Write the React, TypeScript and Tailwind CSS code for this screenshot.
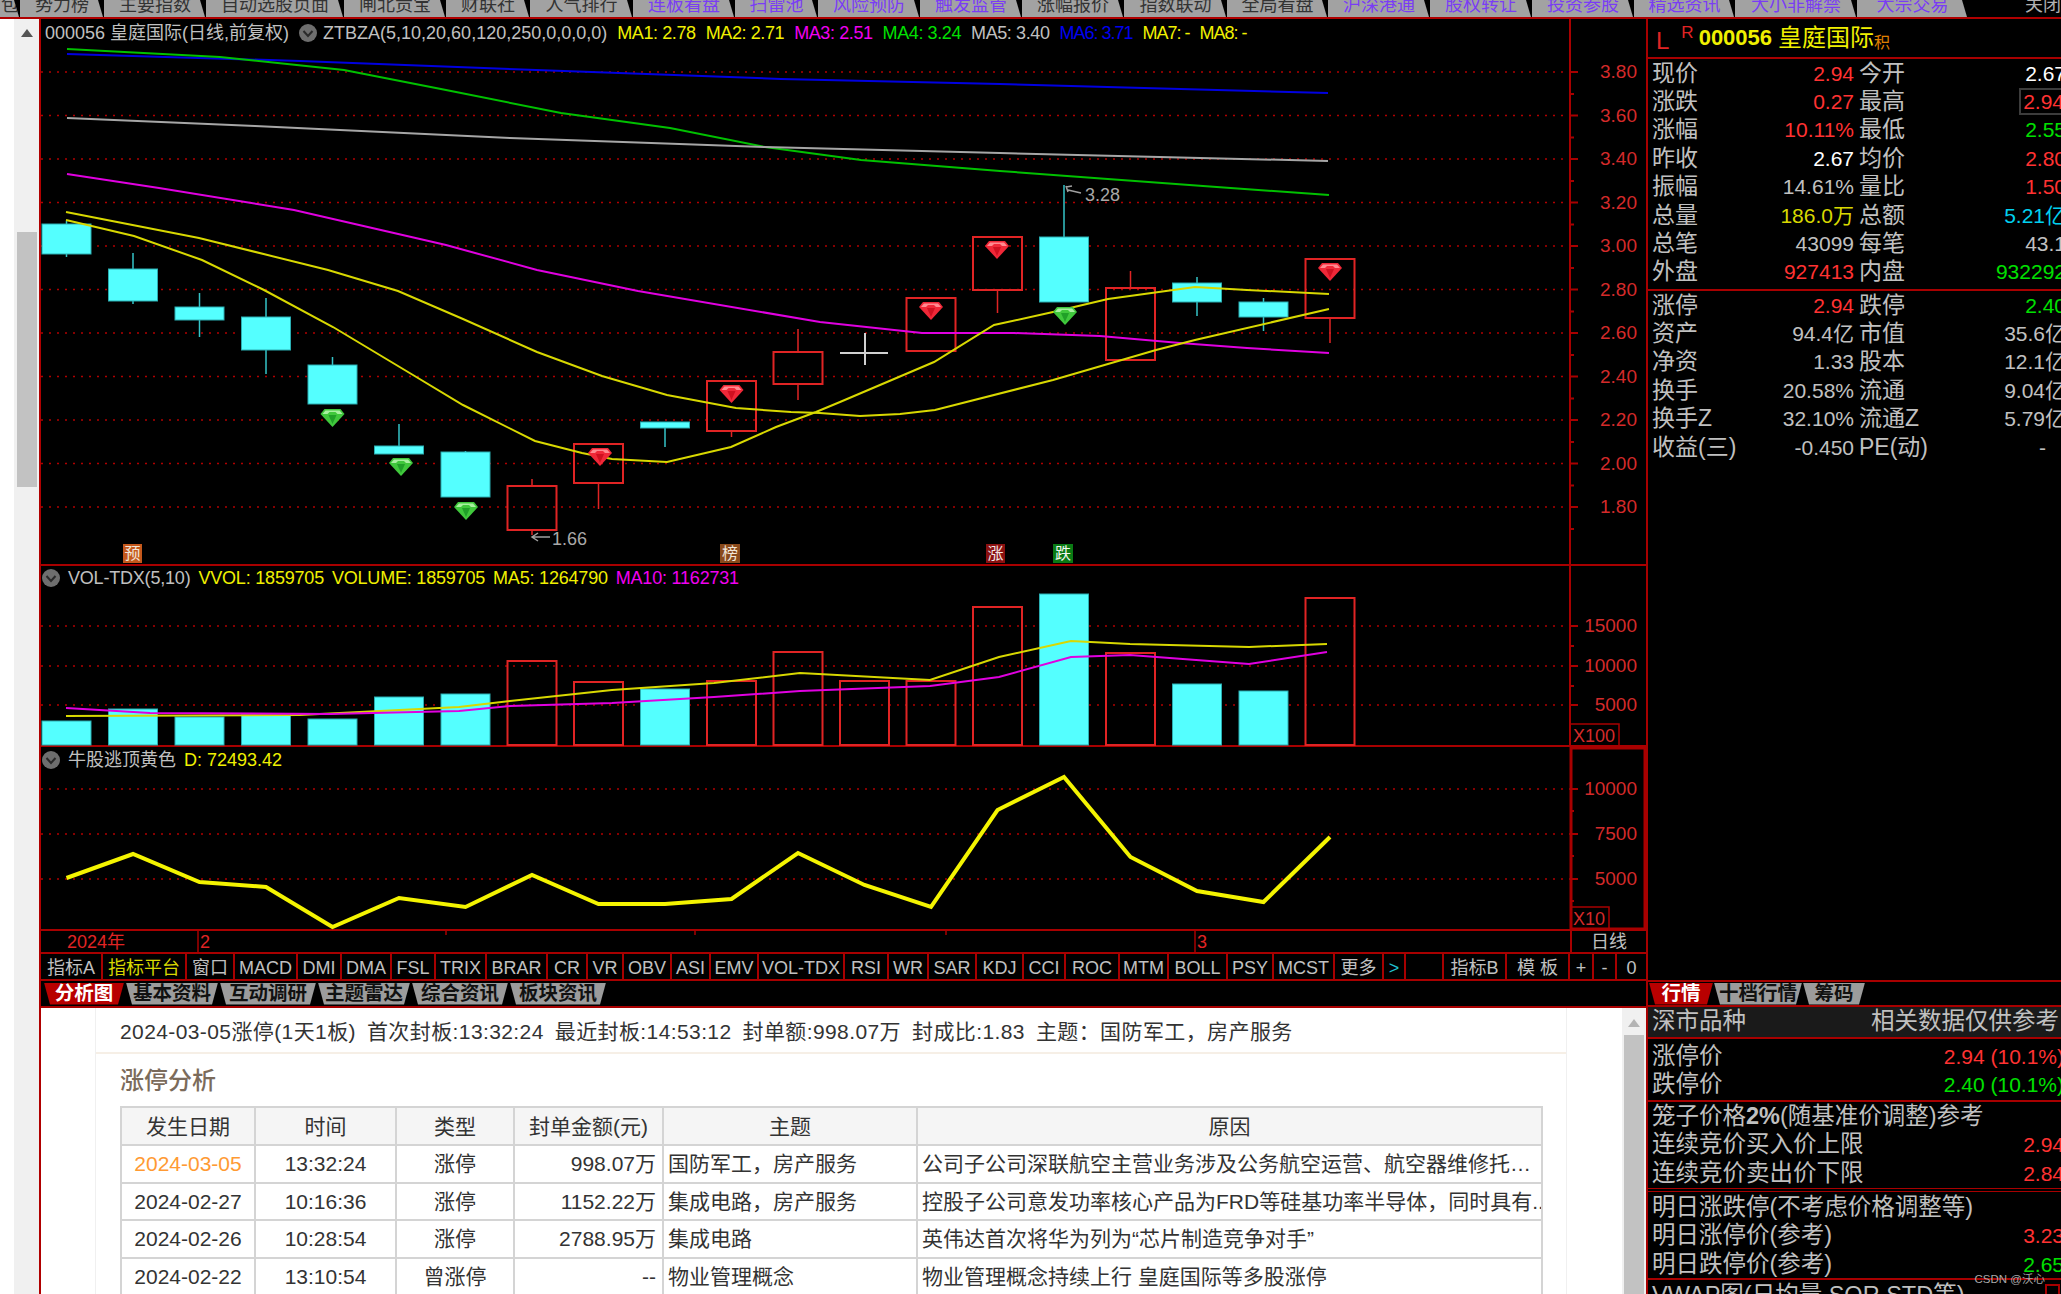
import React from "react";

const RED_LINE = "#a80000";
const CYAN = "#54ffff";

const cx = (i: number) => 66.5 + 66.5 * i;
const pts = (list: number[][]) => list.map((p) => p.join(",")).join(" ");

// 顶部标签，左右被窗口截断
const TOP_TABS = [
  { label: "包", w: "w-[20px]", tone: "text-[#333]" },
  { label: "势力榜", w: "w-[84px]", tone: "text-[#333]" },
  { label: "主要指数", w: "w-[102px]", tone: "text-[#333]" },
  { label: "自动选股页面", w: "w-[138px]", tone: "text-[#333]" },
  { label: "闸北贡宝", w: "w-[102px]", tone: "text-[#333]" },
  { label: "财联社", w: "w-[84px]", tone: "text-[#333]" },
  { label: "人气排行", w: "w-[103px]", tone: "text-[#333]" },
  { label: "连板看盘", w: "w-[102px]", tone: "text-[#7a3cf5]" },
  { label: "扫雷池", w: "w-[83px]", tone: "text-[#7a3cf5]" },
  { label: "风险预防", w: "w-[102px]", tone: "text-[#7a3cf5]" },
  { label: "触发监管", w: "w-[102px]", tone: "text-[#7a3cf5]" },
  { label: "涨幅报价", w: "w-[102px]", tone: "text-[#333]" },
  { label: "指数联动", w: "w-[103px]", tone: "text-[#333]" },
  { label: "全局看盘", w: "w-[101px]", tone: "text-[#333]" },
  { label: "沪深港通", w: "w-[102px]", tone: "text-[#7a3cf5]" },
  { label: "股权转让", w: "w-[102px]", tone: "text-[#7a3cf5]" },
  { label: "投资参股", w: "w-[102px]", tone: "text-[#7a3cf5]" },
  { label: "精选资讯", w: "w-[101px]", tone: "text-[#7a3cf5]" },
  { label: "大小非解禁", w: "w-[122px]", tone: "text-[#7a3cf5]" },
  { label: "大宗交易", w: "w-[111px]", tone: "text-[#7a3cf5]" },
];

const CANDLES = [
  { top: 224, bot: 254, hi: 221, lo: 257 },
  { top: 269, bot: 301, hi: 253, lo: 304 },
  { top: 307, bot: 320, hi: 293, lo: 337 },
  { top: 317, bot: 350, hi: 298, lo: 374 },
  { top: 365, bot: 404, hi: 357, lo: 404 },
  { top: 446, bot: 454, hi: 424, lo: 454 },
  { top: 452, bot: 497, hi: 451, lo: 497 },
  { top: 486, bot: 530, hi: 479, lo: 535, up: true },
  { top: 444, bot: 483, hi: 444, lo: 509, up: true },
  { top: 422, bot: 428, hi: 422, lo: 447 },
  { top: 381, bot: 431, hi: 381, lo: 437, up: true },
  { top: 352, bot: 384, hi: 329, lo: 400, up: true },
  null,
  { top: 298, bot: 351, hi: 298, lo: 351, up: true },
  { top: 237, bot: 290, hi: 237, lo: 313, up: true },
  { top: 237, bot: 302, hi: 185, lo: 302 },
  { top: 288, bot: 360, hi: 271, lo: 360, up: true },
  { top: 283, bot: 302, hi: 277, lo: 316 },
  { top: 302, bot: 317, hi: 298, lo: 331 },
  { top: 259, bot: 318, hi: 259, lo: 343, up: true },
];

const GEMS = [
  { x: 332.5, y: 409, red: false },
  { x: 401, y: 458, red: false },
  { x: 466, y: 502, red: false },
  { x: 600, y: 448, red: true },
  { x: 731.5, y: 385, red: true },
  { x: 931, y: 302, red: true },
  { x: 997, y: 241, red: true },
  { x: 1065, y: 307, red: false },
  { x: 1330, y: 263, red: true },
];

const MA_LINES = [
  {
    color: "#0000e0",
    points: [[67, 54], [300, 61], [564, 71], [781, 79], [1000, 84], [1328, 93]],
  },
  {
    color: "#00c000",
    points: [[67, 49], [220, 57], [344, 70], [446, 90], [561, 113], [670, 128], [765, 147], [861, 160], [1000, 171], [1203, 186], [1329, 195]],
  },
  {
    color: "#a6a6a6",
    points: [[67, 118], [255, 126], [510, 138], [765, 147], [1000, 153], [1328, 161]],
  },
  {
    color: "#e000e0",
    points: [[67, 174], [159, 188], [294, 210], [446, 245], [537, 270], [638, 291], [820, 322], [922, 333], [1014, 333], [1100, 336], [1180, 343], [1247, 348], [1329, 353]],
  },
  {
    color: "#d8d800",
    points: [[66, 212], [199, 238], [328, 270], [398, 291], [463, 319], [537, 352], [602, 376], [667, 395], [736, 408], [791, 412], [820, 413], [860, 416], [900, 414], [935, 410], [1053, 380], [1156, 350], [1195, 340], [1329, 309]],
  },
  {
    color: "#d8d800",
    points: [[66, 220], [134, 236], [202, 260], [264, 290], [333, 327], [413, 375], [463, 405], [535, 441], [582, 453], [612, 459], [667, 462], [731, 447], [776, 427], [816, 412], [840, 402], [934, 362], [994, 325], [1053, 312], [1108, 299], [1195, 287], [1247, 290], [1329, 294]],
  },
];

const PRICE_TICKS = ["3.80", "3.60", "3.40", "3.20", "3.00", "2.80", "2.60", "2.40", "2.20", "2.00", "1.80"];

const VOL_BARS = [
  { top: 721 }, { top: 709 }, { top: 717 }, { top: 715 }, { top: 719 },
  { top: 697 }, { top: 694 }, { top: 661, up: true }, { top: 682, up: true }, { top: 689 },
  { top: 681, up: true }, { top: 652, up: true }, { top: 681, up: true }, { top: 681, up: true }, { top: 607, up: true },
  { top: 594 }, { top: 653, up: true }, { top: 684 }, { top: 691 }, { top: 598, up: true },
];

const TDX_LINE = [878, 854, 882, 887, 927, 898, 907, 875, 904, 904, 899, 853, 885, 907, 810, 777, 857, 891, 902, 837];

const INDICATORS = [
  { label: "指标A", w: "w-[62px]" },
  { label: "指标平台", w: "w-[84px]", tone: "text-[#d8d800]" },
  { label: "窗口", w: "w-[48px]" },
  { label: "MACD", w: "w-[63px]" },
  { label: "DMI", w: "w-[44px]" },
  { label: "DMA", w: "w-[50px]" },
  { label: "FSL", w: "w-[44px]" },
  { label: "TRIX", w: "w-[51px]" },
  { label: "BRAR", w: "w-[61px]" },
  { label: "CR", w: "w-[40px]" },
  { label: "VR", w: "w-[36px]" },
  { label: "OBV", w: "w-[48px]" },
  { label: "ASI", w: "w-[39px]" },
  { label: "EMV", w: "w-[48px]" },
  { label: "VOL-TDX", w: "w-[86px]" },
  { label: "RSI", w: "w-[44px]" },
  { label: "WR", w: "w-[40px]" },
  { label: "SAR", w: "w-[48px]" },
  { label: "KDJ", w: "w-[47px]" },
  { label: "CCI", w: "w-[42px]" },
  { label: "ROC", w: "w-[54px]" },
  { label: "MTM", w: "w-[49px]" },
  { label: "BOLL", w: "w-[59px]" },
  { label: "PSY", w: "w-[46px]" },
  { label: "MCST", w: "w-[61px]" },
  { label: "更多", w: "w-[49px]" },
  { label: ">", w: "w-[22px]", tone: "text-[#20c0d0]" },
  { label: "", w: "w-[38px]" },
  { label: "指标B", w: "w-[63px]" },
  { label: "模 板", w: "w-[63px]" },
  { label: "+", w: "w-[24px]" },
  { label: "-", w: "w-[23px]" },
  { label: "0", w: "w-[29px]" },
];

const STATS_A = [
  ["现价", "2.94", "text-[#ff3232]", "今开", "2.67", "text-white"],
  ["涨跌", "0.27", "text-[#ff3232]", "最高", "2.94", "text-[#ff3232]"],
  ["涨幅", "10.11%", "text-[#ff3232]", "最低", "2.55", "text-[#00e000]"],
  ["昨收", "2.67", "text-white", "均价", "2.80", "text-[#ff3232]"],
  ["振幅", "14.61%", "text-[#c0c0c0]", "量比", "1.50", "text-[#ff3232]"],
  ["总量", "186.0万", "text-[#d8d800]", "总额", "5.21亿", "text-[#00d0f0]"],
  ["总笔", "43099", "text-[#c0c0c0]", "每笔", "43.1", "text-[#c0c0c0]"],
  ["外盘", "927413", "text-[#ff3232]", "内盘", "932292", "text-[#00e000]"],
];

const STATS_B = [
  ["涨停", "2.94", "text-[#ff3232]", "跌停", "2.40", "text-[#00e000]"],
  ["资产", "94.4亿", "text-[#c0c0c0]", "市值", "35.6亿", "text-[#c0c0c0]"],
  ["净资", "1.33", "text-[#c0c0c0]", "股本", "12.1亿", "text-[#c0c0c0]"],
  ["换手", "20.58%", "text-[#c0c0c0]", "流通", "9.04亿", "text-[#c0c0c0]"],
  ["换手Z", "32.10%", "text-[#c0c0c0]", "流通Z", "5.79亿", "text-[#c0c0c0]"],
  ["收益(三)", "-0.450", "text-[#c0c0c0]", "PE(动)", "-", "text-[#c0c0c0]"],
];

const LIMIT_ROWS = [
  ["2024-03-05", "13:32:24", "涨停", "998.07万", "国防军工，房产服务", "公司子公司深联航空主营业务涉及公务航空运营、航空器维修托…"],
  ["2024-02-27", "10:16:36", "涨停", "1152.22万", "集成电路，房产服务", "控股子公司意发功率核心产品为FRD等硅基功率半导体，同时具有.."],
  ["2024-02-26", "10:28:54", "涨停", "2788.95万", "集成电路", "英伟达首次将华为列为“芯片制造竞争对手”"],
  ["2024-02-22", "13:10:54", "曾涨停", "--", "物业管理概念", "物业管理概念持续上行 皇庭国际等多股涨停"],
];

function Gem({ x, y, red }: { x: number; y: number; red: boolean }) {
  const base = red ? "#f02838" : "#40c83c";
  const light = red ? "#ff8a90" : "#a8f0a0";
  const dark = red ? "#d01020" : "#20a028";
  return (
    <g transform={`translate(${x} ${y})`}>
      <path d="M-8 0H8L12 5L0 18L-12 5Z" fill={base} />
      <path d="M-7 1.5H7L10 5H5L3 3H-3L-5 5H-10Z" fill={light} />
      <path d="M-4 6H4L0 15Z" fill={dark} />
    </g>
  );
}

function Dots({ ys }: { ys: number[] }) {
  return (
    <>
      {ys.map((y) => (
        <line key={y} x1={41} x2={1570} y1={y} y2={y} stroke="#b00000" strokeWidth={1.5} strokeDasharray="2 6" />
      ))}
    </>
  );
}

function AxisLine({ y1, y2 }: { y1: number; y2: number }) {
  return <line x1={1570} x2={1570} y1={y1} y2={y2} stroke={RED_LINE} strokeWidth={2} />;
}

function AxisLabel({ y, text }: { y: number; text: string }) {
  return (
    <>
      <line x1={1570} x2={1578} y1={y} y2={y} stroke={RED_LINE} strokeWidth={2} />
      <text x={1637} y={y + 6} textAnchor="end" fontSize={19} fill="#d42a2a">
        {text}
      </text>
    </>
  );
}

function Marker() {
  return (
    <svg width={18} height={18} viewBox="0 0 18 18" className="shrink-0">
      <circle cx={9} cy={9} r={9} fill="#6e6e6e" />
      <path d="M4.5 7L9 12L13.5 7" fill="none" stroke="#2a2a2a" strokeWidth={2} />
    </svg>
  );
}

function PriceChart() {
  return (
    <svg width={1605} height={546} viewBox="41 19 1605 546" className="block">
      <Dots ys={PRICE_TICKS.map((_, i) => 72 + i * 43.5)} />
      <AxisLine y1={19} y2={565} />
      {PRICE_TICKS.map((t, i) => (
        <React.Fragment key={t}>
          <AxisLabel y={72 + i * 43.5} text={t} />
          <line x1={1570} x2={1574} y1={94 + i * 43.5} y2={94 + i * 43.5} stroke={RED_LINE} strokeWidth={2} />
        </React.Fragment>
      ))}
      {CANDLES.map((c, i) => {
        if (!c) return null;
        const x = cx(i);
        const tone = c.up ? "#e02424" : "#35c4c8";
        return (
          <g key={i}>
            <line x1={x} x2={x} y1={c.hi} y2={c.top} stroke={tone} strokeWidth={1.5} />
            <line x1={x} x2={x} y1={c.bot} y2={c.lo} stroke={tone} strokeWidth={1.5} />
            <rect
              x={x - 24.5}
              y={c.top}
              width={49}
              height={c.bot - c.top}
              fill={c.up ? "none" : CYAN}
              stroke={c.up ? "#e02424" : "#2aaeb2"}
              strokeWidth={c.up ? 2 : 1}
            />
          </g>
        );
      })}
      <line x1={840} x2={888} y1={353} y2={353} stroke="#d0d0d0" strokeWidth={2} />
      <line x1={865} x2={865} y1={333} y2={365} stroke="#d0d0d0" strokeWidth={2} />
      {MA_LINES.map((l, i) => (
        <polyline key={i} points={pts(l.points)} fill="none" stroke={l.color} strokeWidth={2} />
      ))}
      {GEMS.map((g) => (
        <Gem key={g.x} {...g} />
      ))}
      <path d="M1066 186L1068 192M1066 187L1072 186M1068 190L1081 193" fill="none" stroke="#a0a0a0" strokeWidth={1.5} />
      <text x={1085} y={201} fontSize={18} fill="#a8a8a8">3.28</text>
      <path d="M550 537H532M538 533L532 537L538 541" fill="none" stroke="#a0a0a0" strokeWidth={1.5} />
      <text x={552} y={545} fontSize={18} fill="#a8a8a8">1.66</text>
      <rect x={123} y={544} width={19} height={19} fill="#c4581c" />
      <text x={132.5} y={559} fontSize={16} fill="#f2e6d8" textAnchor="middle">预</text>
      <rect x={720} y={544} width={20} height={19} fill="#8a4a1c" />
      <text x={730} y={559} fontSize={16} fill="#f2e6d8" textAnchor="middle">榜</text>
      <rect x={986} y={544} width={19} height={19} fill="#8a1010" />
      <text x={995.5} y={559} fontSize={16} fill="#f2e6e6" textAnchor="middle">涨</text>
      <rect x={1053} y={544} width={20} height={19} fill="#0a7a14" />
      <text x={1063} y={559} fontSize={16} fill="#f0f6f0" textAnchor="middle">跌</text>
    </svg>
  );
}

function VolumeChart() {
  const yellow = [[66, 716], [300, 715], [459, 707], [510, 701], [612, 690], [714, 683], [800, 673], [930, 680], [999, 657], [1071, 641], [1130, 644], [1249, 647], [1327, 644]];
  const magenta = [[66, 708], [150, 713], [330, 714], [459, 711], [510, 706], [612, 703], [714, 697], [800, 691], [930, 686], [999, 677], [1071, 657], [1130, 655], [1249, 664], [1327, 652]];
  return (
    <svg width={1605} height={180} viewBox="41 566 1605 180" className="block">
      <Dots ys={[626, 666, 705]} />
      <AxisLine y1={566} y2={746} />
      <AxisLabel y={626} text="15000" />
      <AxisLabel y={666} text="10000" />
      <AxisLabel y={705} text="5000" />
      <line x1={1570} x2={1574} y1={646} y2={646} stroke={RED_LINE} strokeWidth={2} />
      <line x1={1570} x2={1574} y1={686} y2={686} stroke={RED_LINE} strokeWidth={2} />
      <rect x={1570} y={724} width={49} height={22} fill="none" stroke={RED_LINE} strokeWidth={1.5} />
      <text x={1573} y={742} fontSize={18} fill="#d42a2a">X100</text>
      {VOL_BARS.map((b, i) => (
        <rect
          key={i}
          x={cx(i) - 24.5}
          y={b.top}
          width={49}
          height={745 - b.top}
          fill={b.up ? "none" : CYAN}
          stroke={b.up ? "#e02424" : "#2aaeb2"}
          strokeWidth={b.up ? 2 : 1}
        />
      ))}
      <polyline points={pts(yellow)} fill="none" stroke="#d8d800" strokeWidth={2} />
      <polyline points={pts(magenta)} fill="none" stroke="#e000e0" strokeWidth={2} />
    </svg>
  );
}

function TopIndicatorChart() {
  return (
    <svg width={1605} height={183} viewBox="41 747 1605 183" className="block">
      <Dots ys={[789, 834, 879]} />
      <rect x={1571} y={748} width={74} height={181} fill="none" stroke={RED_LINE} strokeWidth={3} />
      <AxisLabel y={789} text="10000" />
      <AxisLabel y={834} text="7500" />
      <AxisLabel y={879} text="5000" />
      <line x1={1570} x2={1574} y1={811} y2={811} stroke={RED_LINE} strokeWidth={2} />
      <line x1={1570} x2={1574} y1={856} y2={856} stroke={RED_LINE} strokeWidth={2} />
      <line x1={1570} x2={1574} y1={901} y2={901} stroke={RED_LINE} strokeWidth={2} />
      <rect x={1571} y={907} width={38} height={22} fill="none" stroke={RED_LINE} strokeWidth={1.5} />
      <text x={1573} y={925} fontSize={18} fill="#d42a2a">X10</text>
      <polyline
        points={pts(TDX_LINE.map((y, i) => [cx(i), y]))}
        fill="none"
        stroke="#f4f400"
        strokeWidth={4}
      />
    </svg>
  );
}

function DateAxis() {
  return (
    <svg width={1529} height={21} viewBox="41 931 1529 21" className="block shrink-0">
      <text x={67} y={948} fontSize={18} fill="#e02424">2024年</text>
      <line x1={198} x2={198} y1={931} y2={952} stroke={RED_LINE} strokeWidth={1.5} />
      <text x={200} y={948} fontSize={18} fill="#e02424">2</text>
      <line x1={1195} x2={1195} y1={931} y2={952} stroke={RED_LINE} strokeWidth={1.5} />
      <text x={1197} y={948} fontSize={18} fill="#e02424">3</text>
      {[446, 695, 946].map((x) => (
        <line key={x} x1={x} x2={x} y1={931} y2={935} stroke={RED_LINE} strokeWidth={1.5} />
      ))}
    </svg>
  );
}

function StatRow({ row }: { row: string[] }) {
  const [a, av, at, b, bv, bt] = row;
  return (
    <div className="flex h-[28.4px] w-[430px] items-center">
      <span className="w-[110px] shrink-0 pl-[4px] text-[23px] leading-none text-[#c0c0c0]">{a}</span>
      <span className={`w-[96px] shrink-0 text-right text-[21px] leading-none ${at}`}>{av}</span>
      <span className="ml-[5px] w-[100px] shrink-0 text-[23px] leading-none whitespace-nowrap text-[#c0c0c0]">{b}</span>
      <span className={`w-[107px] shrink-0 text-right text-[21px] leading-none ${bt}`}>
        {b === "最高" && <span className="inline-block h-[27px] border-2 border-[#3c3c3c] pl-[2px] leading-[23px]">{bv}</span>}
        {bv === "-" && <span className="pr-[20px]">{bv}</span>}
        {b !== "最高" && bv !== "-" && bv}
      </span>
    </div>
  );
}

function PriceRow({ label, value, tone }: { label: React.ReactNode; value?: string; tone?: string }) {
  return (
    <div className="flex h-[28.5px] w-[416px] items-center justify-between pl-[4px] whitespace-nowrap">
      <span className="text-[23.5px] leading-none text-[#c0c0c0]">{label}</span>
      {value && <span className={`text-[21px] leading-none ${tone}`}>{value}</span>}
    </div>
  );
}

function FeatureTab({ label, w, active }: { label: string; w: string; active?: boolean }) {
  return (
    <div
      className={`flex h-[22px] shrink-0 items-center justify-center text-[19.5px] leading-none font-bold whitespace-nowrap [clip-path:polygon(0_0,100%_0,calc(100%-6px)_100%,6px_100%)] ${w} ${
        active ? "bg-[#b80000] text-white" : "bg-[#9c9c9c] text-[#111]"
      }`}
    >
      {label}
    </div>
  );
}

export default function App() {
  return (
    <div className="h-[1294px] w-[2061px] overflow-hidden bg-black [font-family:'Liberation_Sans','Noto_Sans_CJK_SC',sans-serif]">
      {/* 顶部标签条 */}
      <div className="flex h-[19px] border-b-2 border-[#b00000]">
        {TOP_TABS.map((t) => (
          <div key={t.label} className={`h-[17px] shrink-0 text-[18px] leading-none whitespace-nowrap ${t.w} ${t.tone}`}>
            <div className="flex h-[17px] w-full items-center justify-center bg-[#a2a2a2] pb-[7px] [clip-path:polygon(0_0,calc(100%-6px)_0,calc(100%-1px)_100%,0_100%)]">
              {t.label}
            </div>
          </div>
        ))}
        <div className="ml-[57px] flex h-[17px] items-center pb-[7px] text-[18px] whitespace-nowrap text-[#b0b0b0]">关闭</div>
      </div>

      <div className="flex h-[1275px]">
        {/* 左侧滚动条 */}
        <div className="flex w-[39px] shrink-0">
          <div className="w-[14px] bg-white" />
          <div className="flex w-[25px] flex-col items-center bg-[#f0f0f0] pt-[10px]">
            <svg width={12} height={8} viewBox="0 0 12 8" className="shrink-0">
              <path d="M6 0L12 8H0Z" fill="#555" />
            </svg>
            <div className="mt-[195px] h-[255px] w-[20px] bg-[#c2c2c2]" />
          </div>
        </div>

        {/* 中间主区 */}
        <div className="flex w-[1607px] shrink-0 flex-col border-l-2 border-[#b00000]">
          <div className="relative h-[547px] border-b-2 border-[#a80000]">
            <PriceChart />
            <div className="absolute top-0 left-[4px] flex h-[28px] items-center gap-[10px] text-[18px] leading-none whitespace-nowrap">
              <span className="text-[#c0c0c0]">000056 皇庭国际(日线,前复权)</span>
              <Marker />
              <span className="-ml-[4px] text-[#c0c0c0]">ZTBZA(5,10,20,60,120,250,0,0,0,0)</span>
              <span className="tracking-[-0.4px] text-[#f0f000]">MA1: 2.78</span>
              <span className="tracking-[-0.4px] text-[#f0f000]">MA2: 2.71</span>
              <span className="tracking-[-0.4px] text-[#f000f0]">MA3: 2.51</span>
              <span className="tracking-[-0.4px] text-[#00e000]">MA4: 3.24</span>
              <span className="tracking-[-0.4px] text-[#c0c0c0]">MA5: 3.40</span>
              <span className="tracking-[-1px] text-[#0000f0]">MA6: 3.71</span>
              <span className="tracking-[-1px] text-[#f0f000]">MA7: -</span>
              <span className="tracking-[-1px] text-[#f0f000]">MA8: -</span>
            </div>
          </div>

          <div className="relative h-[181px] border-b-2 border-[#a80000]">
            <VolumeChart />
            <div className="absolute top-0 left-[1px] flex h-[24px] items-center gap-[8px] text-[18px] leading-none tracking-[-0.2px] whitespace-nowrap">
              <Marker />
              <span className="text-[#c0c0c0]">VOL-TDX(5,10)</span>
              <span className="text-[#f0f000]">VVOL: 1859705</span>
              <span className="text-[#f0f000]">VOLUME: 1859705</span>
              <span className="text-[#f0f000]">MA5: 1264790</span>
              <span className="text-[#f000f0]">MA10: 1162731</span>
            </div>
          </div>

          <div className="relative h-[184px] border-b-2 border-[#a80000]">
            <TopIndicatorChart />
            <div className="absolute top-0 left-[1px] flex h-[26px] items-center gap-[8px] text-[18px] leading-none whitespace-nowrap">
              <Marker />
              <span className="text-[#c0c0c0]">牛股逃顶黄色</span>
              <span className="text-[#f0f000]">D: 72493.42</span>
            </div>
          </div>

          <div className="flex h-[23px] border-b-2 border-[#a80000]">
            <DateAxis />
            <div className="flex flex-1 items-center justify-center border-l-2 border-[#a80000] text-[18px] leading-none text-[#c0c0c0]">日线</div>
          </div>

          <div className="flex h-[27px] border-b-2 border-[#a80000]">
            {INDICATORS.map((t, i) => (
              <div
                key={i}
                className={`flex shrink-0 items-center justify-center border-r-2 border-[#a80000] pt-[2px] text-[18px] leading-none whitespace-nowrap last:border-r-0 ${t.w} ${t.tone ?? "text-[#c0c0c0]"}`}
              >
                {t.label}
              </div>
            ))}
          </div>

          <div className="flex h-[27px] items-center gap-[2px] border-b-2 border-[#a80000] pl-[3px]">
            <FeatureTab label="分析图" w="w-[80px]" active />
            <FeatureTab label="基本资料" w="w-[92px]" />
            <FeatureTab label="互动调研" w="w-[96px]" />
            <FeatureTab label="主题雷达" w="w-[92px]" />
            <FeatureTab label="综合资讯" w="w-[96px]" />
            <FeatureTab label="板块资讯" w="w-[96px]" />
          </div>

          {/* 网页内容区 */}
          <div className="flex h-[286px] overflow-hidden bg-white text-[21px] leading-none text-[#333]">
            <div className="w-[55px] shrink-0 border-r border-[#f0f0f0]" />
            <div className="w-[1471px] shrink-0 border-r border-[#f0f0f0]">
              <div className="flex h-[46px] items-center gap-[11px] border-b-2 border-[#f6efe6] pt-[2px] pl-[24px] tracking-[0.4px] whitespace-nowrap">
                <span>2024-03-05涨停(1天1板)</span>
                <span>首次封板:13:32:24</span>
                <span>最近封板:14:53:12</span>
                <span>封单额:998.07万</span>
                <span>封成比:1.83</span>
                <span>主题：国防军工，房产服务</span>
              </div>
              <div className="flex h-[52px] items-center pt-[2px] pl-[24px] text-[24px] font-medium text-[#7b6b5b]">涨停分析</div>
              <table className="ml-[24px] w-[1421px] table-fixed border-collapse">
                <colgroup>
                  <col className="w-[134px]" />
                  <col className="w-[141px]" />
                  <col className="w-[118px]" />
                  <col className="w-[149px]" />
                  <col className="w-[254px]" />
                  <col className="w-[625px]" />
                </colgroup>
                <thead>
                  <tr className="h-[38px] bg-[#f5f5f5]">
                    {["发生日期", "时间", "类型", "封单金额(元)", "主题", "原因"].map((h) => (
                      <th key={h} className="border-2 border-[#d4d4d4] text-center font-normal whitespace-nowrap">{h}</th>
                    ))}
                  </tr>
                </thead>
                <tbody>
                  {LIMIT_ROWS.map((r, i) => (
                    <tr key={r[0]} className="h-[37.5px]">
                      <td className={`border-2 border-[#d4d4d4] text-center ${i === 0 ? "text-[#ff9a33]" : ""}`}>{r[0]}</td>
                      <td className="border-2 border-[#d4d4d4] text-center">{r[1]}</td>
                      <td className="border-2 border-[#d4d4d4] text-center">{r[2]}</td>
                      <td className="border-2 border-[#d4d4d4] pr-[6px] text-right">{r[3]}</td>
                      <td className="border-2 border-[#d4d4d4] pl-[4px] whitespace-nowrap">{r[4]}</td>
                      <td className="overflow-hidden border-2 border-[#d4d4d4] pl-[4px] whitespace-nowrap">{r[5]}</td>
                    </tr>
                  ))}
                </tbody>
              </table>
            </div>
            <div className="w-[55px] shrink-0" />
            <div className="flex w-[24px] shrink-0 flex-col items-center bg-[#f0f0f0] pt-[11px]">
              <svg width={12} height={8} viewBox="0 0 12 8" className="shrink-0">
                <path d="M6 0L12 8H0Z" fill="#b4b4b4" />
              </svg>
              <div className="mt-[8px] w-[20px] flex-1 bg-[#c2c2c2]" />
            </div>
          </div>
        </div>

        {/* 右侧行情面板 */}
        <div className="relative w-[415px] shrink-0 overflow-hidden border-l-2 border-[#a80000]">
          <div className="flex h-[40px] items-center border-b-2 border-[#a80000] pl-[8px] leading-none whitespace-nowrap">
            <span className="mt-[6px] text-[24px] text-[#e02424]">L</span>
            <span className="mb-[12px] ml-[12px] text-[17px] text-[#e02424]">R</span>
            <span className="ml-[5px] text-[22px] font-bold text-[#f0f000]">000056</span>
            <span className="ml-[6px] text-[24px] text-[#f0f000]">皇庭国际</span>
            <span className="mt-[10px] text-[16px] text-[#e08000]">积</span>
          </div>

          <div className="h-[232px] border-b-2 border-[#a80000]">
            {STATS_A.map((row) => (
              <StatRow key={row[0]} row={row} />
            ))}
          </div>
          <div className="h-[689px]">
            {STATS_B.map((row) => (
              <StatRow key={row[0]} row={row} />
            ))}
          </div>

          <div className="h-[27px] border-y-2 border-[#a80000]">
            <div className="flex h-[23px] items-center gap-[1px] pl-[1px]">
              <FeatureTab label="行情" w="w-[64px]" active />
              <FeatureTab label="十档行情" w="w-[88px]" />
              <FeatureTab label="筹码" w="w-[62px]" />
            </div>
          </div>

          <div className="flex h-[32px] items-center justify-between border-b-2 border-[#a80000] bg-[#1a1a1a] pr-[2px] pl-[4px] text-[23.5px] leading-none text-[#c0c0c0]">
            <span>深市品种</span>
            <span>相关数据仅供参考</span>
          </div>
          <div className="h-[63px] border-b-2 border-[#a80000] pt-[3px]">
            <PriceRow label="涨停价" value="2.94 (10.1%)" tone="text-[#ff3232]" />
            <PriceRow label="跌停价" value="2.40 (10.1%)" tone="text-[#00e000]" />
          </div>
          <div className="h-[90px] border-b-4 border-double border-[#a80000]">
            <PriceRow label={<>笼子价格<span className="font-bold">2%</span>(随基准价调整)参考</>} />
            <PriceRow label="连续竞价买入价上限" value="2.94" tone="text-[#ff3232]" />
            <PriceRow label="连续竞价卖出价下限" value="2.84" tone="text-[#ff3232]" />
          </div>
          <div className="h-[88px] border-b-2 border-[#a80000] pt-[1px]">
            <PriceRow label="明日涨跌停(不考虑价格调整等)" />
            <PriceRow label="明日涨停价(参考)" value="3.23" tone="text-[#ff3232]" />
            <PriceRow label="明日跌停价(参考)" value="2.65" tone="text-[#00e000]" />
          </div>
          <div className="flex h-[28px] w-[412px] justify-between pt-[4px] pl-[4px] text-[23.5px] leading-none text-[#c0c0c0]">
            <span>VWAP图(日均量 SOR STD等)</span>
            <span className="h-[16px] w-[15px] border-2 border-[#a80000]" />
          </div>

          <span className="absolute right-[16px] bottom-[9px] text-[11.5px] leading-none whitespace-nowrap text-[#a8a8a8]">CSDN @沃心</span>
        </div>
      </div>
    </div>
  );
}
